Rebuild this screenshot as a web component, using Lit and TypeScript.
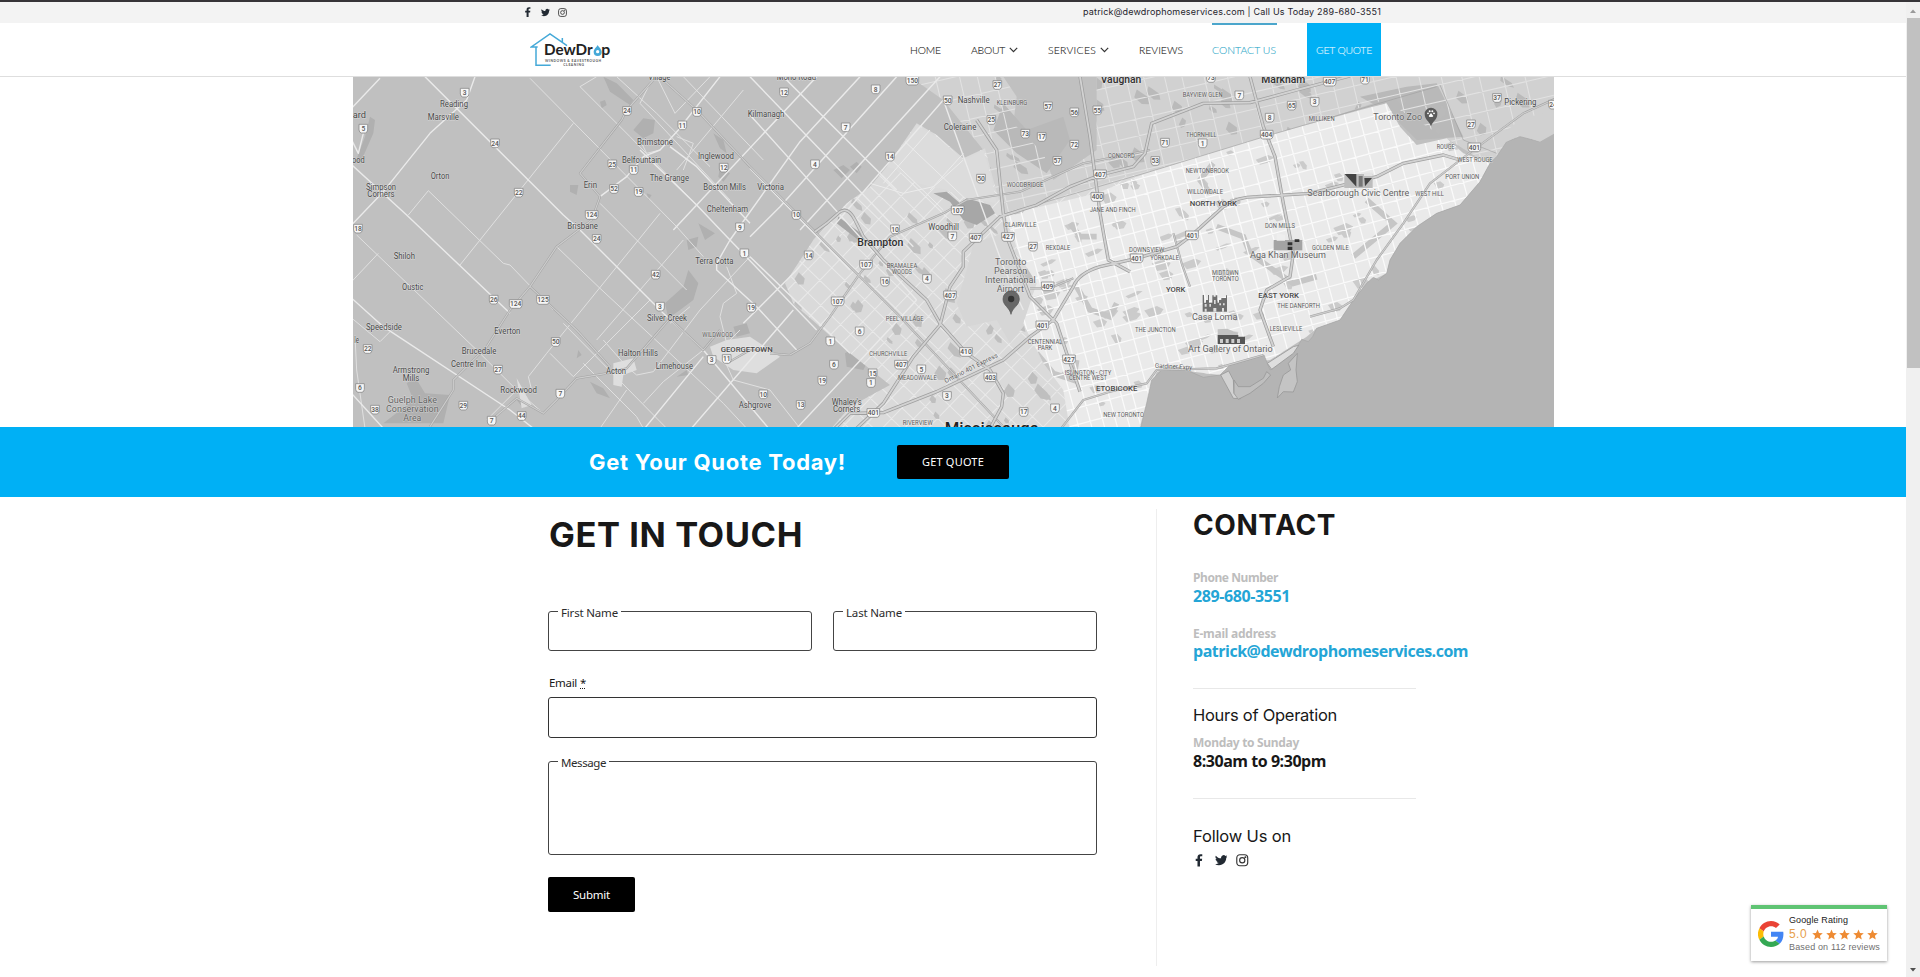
import { LitElement, html, svg, css } from "lit";
import { customElement, property } from "lit/decorators.js";

/** A line of text whose tracking is derived from the width it should take. */
@customElement("tracked-text")
class TrackedText extends LitElement {
  @property({ type: Number }) width = 0;
  @property() text = "";
  static styles = css`
    :host { display: inline-block; white-space: pre; line-height: 1; }
  `;
  render() {
    return html`<span>${this.text}</span>`;
  }
  updated() {
    const span = this.renderRoot.querySelector("span") as HTMLElement;
    span.style.letterSpacing = "0px";
    const natural = span.getBoundingClientRect().width;
    const step = (this.width - natural) / this.text.length;
    span.style.letterSpacing = step.toFixed(3) + "px";
  }
}

const t = (text: string, width: number) =>
  html`<tracked-text .text=${text} .width=${width}></tracked-text>`;

type Label = [number, number, string, number, string];
type Shield = [number, number, string];

// x centre, y centre, text, width, style
const westLabels: Label[] = [
  [928, 20, "Village", 66, "town"], [312, 102, "Reading", 84, "town"], [280, 141, "Marsville", 94, "town"],
  [28, 135, "ard", 40, "town"], [25, 271, "ood", 38, "town"], [270, 319, "Orton", 56, "town"],
  [93, 350, "Simpson", 90, "town"], [93, 373, "Corners", 82, "town"], [163, 559, "Shiloh", 64, "town"],
  [188, 650, "Oustic", 64, "town"], [102, 771, "Speedside", 108, "town"], [20, 809, "le", 14, "town"],
  [387, 844, "Brucedale", 104, "town"], [356, 883, "Centre Inn", 106, "town"], [183, 901, "Armstrong", 110, "town"],
  [183, 924, "Mills", 50, "town"], [472, 783, "Everton", 78, "town"], [506, 961, "Rockwood", 110, "town"],
  [698, 467, "Brisbane", 92, "town"], [721, 345, "Erin", 40, "town"], [915, 215, "Brimstone", 108, "town"],
  [875, 271, "Belfountain", 118, "town"], [958, 324, "The Grange", 118, "town"], [1098, 257, "Inglewood", 108, "town"],
  [1124, 352, "Boston Mills", 128, "town"], [1132, 418, "Cheltenham", 124, "town"], [1093, 573, "Terra Cotta", 114, "town"],
  [951, 744, "Silver Creek", 120, "town"], [864, 850, "Halton Hills", 120, "town"], [798, 902, "Acton", 60, "town"],
  [973, 889, "Limehouse", 112, "town"], [1103, 793, "WILDWOOD", 92, "area"], [1190, 838, "GEORGETOWN", 156, "city"],
  [187, 990, "Guelph Lake", 148, "poi"], [187, 1017, "Conservation", 158, "poi"], [187, 1044, "Area", 54, "poi"],
  [1215, 1004, "Ashgrove", 98, "town"],
];
const midLabels: Label[] = [
  [139, 20, "Mono Road", 118, "town"], [48, 131, "Kilmanagh", 110, "town"], [62, 352, "Victoria", 80, "town"],
  [391, 518, "Brampton", 138, "metro"], [581, 471, "Woodhill", 92, "town"], [671, 89, "Nashville", 96, "town"],
  [786, 98, "KLEINBURG", 92, "area"], [630, 172, "Coleraine", 98, "town"], [1113, 27, "Vaughan", 122, "metro"],
  [1114, 257, "CONCORD", 80, "area"], [825, 345, "WOODBRIDGE", 110, "area"], [1088, 419, "JANE AND FINCH", 138, "area"],
  [811, 464, "CLAIRVILLE", 96, "area"], [924, 532, "REXDALE", 74, "area"], [1190, 538, "DOWNSVIEW", 106, "area"],
  [782, 576, "Toronto", 94, "poi"], [782, 604, "Pearson", 100, "poi"], [781, 631, "International", 152, "poi"],
  [781, 657, "Airport", 82, "poi"], [456, 587, "BRAMALEA", 92, "area"], [456, 604, "WOODS", 60, "area"],
  [464, 745, "PEEL VILLAGE", 114, "area"], [415, 852, "CHURCHVILLE", 114, "area"], [502, 924, "MEADOWVALE", 116, "area"],
  [885, 816, "CENTENNIAL", 104, "area"], [885, 832, "PARK", 44, "area"], [1014, 907, "ISLINGTON - CITY", 140, "area"],
  [1014, 924, "CENTRE WEST", 114, "area"], [1100, 955, "ETOBICOKE", 124, "city"], [1121, 1034, "NEW TORONTO", 122, "area"],
  [290, 995, "Whaley's", 90, "town"], [290, 1018, "Corners", 82, "town"], [503, 1057, "RIVERVIEW", 90, "area"],
  [725, 1074, "Mississauga", 282, "giant"], [1216, 780, "THE JUNCTION", 122, "area"],
];
const eastLabels: Label[] = [
  [400, 27, "Markham", 132, "metro"], [158, 73, "BAYVIEW GLEN", 120, "area"], [515, 147, "MILLIKEN", 78, "area"],
  [154, 194, "THORNHILL", 92, "area"], [172, 301, "NEWTONBROOK", 130, "area"], [165, 364, "WILLOWDALE", 108, "area"],
  [190, 401, "NORTH YORK", 142, "city"], [390, 467, "DON MILLS", 90, "area"], [541, 533, "GOLDEN MILE", 110, "area"],
  [414, 556, "Aga Khan Museum", 228, "poi"], [44, 563, "YORKDALE", 86, "area"], [226, 608, "MIDTOWN", 80, "area"],
  [226, 625, "TORONTO", 80, "area"], [77, 658, "YORK", 58, "city"], [386, 676, "EAST YORK", 122, "city"],
  [446, 708, "THE DANFORTH", 128, "area"], [194, 741, "Casa Loma", 136, "poi"], [408, 776, "LESLIEVILLE", 98, "area"],
  [241, 837, "Art Gallery of Ontario", 254, "poi"], [625, 369, "Scarborough Civic Centre", 306, "poi"],
  [839, 371, "WEST HILL", 86, "area"], [937, 321, "PORT UNION", 102, "area"], [975, 270, "WEST ROUGE", 106, "area"],
  [887, 231, "ROUGE", 54, "area"], [743, 140, "Toronto Zoo", 146, "poi"], [1111, 97, "Pickering", 96, "town"],
];
const westShields: Shield[] = [
  [344, 68, "3"], [40, 176, "5"], [435, 220, "24"], [506, 368, "22"], [24, 476, "18"], [831, 123, "24"], [1041, 126, "10"],
  [997, 166, "11"], [787, 283, "25"], [851, 300, "11"], [792, 357, "52"], [866, 366, "19"], [1121, 293, "12"], [725, 435, "124"],
  [740, 507, "24"], [1170, 472, "9"], [1183, 550, "1"], [917, 614, "42"], [930, 710, "3"], [431, 689, "26"], [497, 702, "124"],
  [579, 690, "125"], [617, 816, "50"], [53, 837, "22"], [444, 899, "27"], [30, 954, "6"], [75, 1019, "38"], [340, 1007, "29"],
  [425, 1052, "7"], [515, 1038, "44"], [631, 971, "7"], [1085, 870, "3"], [1130, 867, "11"], [1204, 713, "19"],
];
const midShields: Shield[] = [
  [102, 67, "12"], [377, 58, "8"], [487, 32, "150"], [287, 172, "7"], [195, 283, "4"], [420, 260, "14"], [593, 91, "50"],
  [742, 45, "27"], [894, 109, "57"], [973, 127, "56"], [1042, 121, "55"], [724, 150, "25"], [826, 191, "73"], [875, 201, "17"],
  [973, 224, "72"], [922, 273, "57"], [693, 326, "50"], [1050, 313, "407"], [1042, 381, "400"], [623, 421, "107"], [139, 435, "10"],
  [435, 478, "10"], [607, 499, "7"], [677, 504, "407"], [774, 501, "427"], [849, 530, "27"], [176, 556, "14"], [348, 584, "107"],
  [405, 635, "16"], [531, 627, "4"], [893, 649, "409"], [1160, 565, "401"], [600, 676, "407"], [263, 694, "107"],
  [329, 784, "6"], [241, 814, "1"], [877, 766, "401"], [648, 846, "410"], [252, 884, "6"], [453, 884, "407"], [514, 898, "5"],
  [957, 868, "427"], [368, 910, "15"], [363, 939, "1"], [721, 922, "403"], [217, 932, "19"], [40, 973, "10"], [152, 1005, "13"],
  [591, 978, "3"], [370, 1029, "401"], [821, 1026, "17"], [915, 1015, "4"],
];
const eastShields: Shield[] = [
  [183, 24, "73"], [539, 35, "407"], [645, 29, "71"], [268, 76, "7"], [425, 107, "65"], [494, 96, "3"], [359, 143, "8"],
  [350, 194, "404"], [45, 218, "71"], [158, 220, "1"], [16, 273, "53"], [1041, 84, "37"], [1209, 104, "24"], [963, 163, "27"],
  [973, 232, "401"], [126, 496, "401"],
];

const heights: Record<string, number> = { town: 25, area: 19, city: 24, poi: 27, metro: 31, giant: 50 };
const label = ([x, y, s, w, k]: Label) => svg`<text class=${"lb " + k} x=${x} y=${y + heights[k] * 0.35}
  textLength=${w} lengthAdjust="spacingAndGlyphs">${s}</text>`;
const shield = ([x, y, s]: Shield) => {
  const w = s.length === 3 ? 38 : 26;
  return svg`<path class="sh" d="M${x - w / 2} ${y - 13}H${x + w / 2}V${y + 4}Q${x + w / 2 - 1} ${y + 12} ${x + w / 2 - 7} ${y + 13}H${x - w / 2 + 7}Q${x - w / 2 + 1} ${y + 12} ${x - w / 2} ${y + 4}Z"/>
  <text class="shn" x=${x} y=${y + 7}>${s}</text>`;
};

/** Repeatable pseudo random numbers, used for parks and grid spacing. */
const rng = (seed: number) => () => {
  seed = (seed * 1664525 + 1013904223) % 4294967296;
  return seed / 4294967296;
};
const grid = (cx: number, cy: number, angle: number, reach: number, gap: number, gapY: number, seed: number) => {
  const r = rng(seed);
  let d = "";
  for (let p = -reach; p < reach; p += gap * (0.8 + r() * 0.4)) d += `M${p.toFixed(0)} ${-reach}V${reach}`;
  for (let p = -reach; p < reach; p += gapY * (0.8 + r() * 0.4)) d += `M${-reach} ${p.toFixed(0)}H${reach}`;
  return svg`<path transform=${`translate(${cx} ${cy}) rotate(${angle})`} d=${d}/>`;
};
const parks = (x0: number, y0: number, w: number, h: number, n: number, seed: number, angle: number) => {
  const r = rng(seed);
  return Array.from({ length: n }, () => {
    const x = x0 + r() * w, y = y0 + r() * h, a = 8 + r() * 20, b = 5 + r() * 13;
    return svg`<path transform=${`translate(${x.toFixed(0)} ${y.toFixed(0)}) rotate(${angle})`}
      d=${`M${-a} ${-b}L${a * 0.5} ${-b * 0.8}L${a} ${b * 0.3}L${a * 0.3} ${b}L${-a * 0.8} ${b * 0.6}Z`}/>`;
  });
};

@customElement("area-map")
class AreaMap extends LitElement {
  static styles = css`
    :host { display: block; width: 1201px; height: 350px; }
    svg { display: block; width: 100%; height: 100%; }
    text { font-family: Roboto, sans-serif; text-anchor: middle; }
    .lb { paint-order: stroke; stroke: #fff; stroke-opacity: .4; stroke-width: 3px; fill: #484848; }
    .town { font-size: 25px; }
    .area { font-size: 19.500px; fill: #5c5c5c; }
    .city { font-size: 24px; font-weight: 500; }
    .poi { font-size: 27px; fill: #636363; }
    .metro { font-size: 31px; font-weight: 500; fill: #303030; }
    .giant { font-size: 50px; font-weight: 500; fill: #222; }
    .sh { fill: #f6f6f6; stroke: #8b8b8b; stroke-width: 2.5px; }
    .shn { font-size: 20px; font-weight: 500; fill: #555; }
    .road { fill: none; stroke: #eaeaea; stroke-width: 4.2px; stroke-linejoin: round; }
    .lane { fill: none; stroke: #e0e0e0; stroke-width: 3px; stroke-linejoin: round; }
    .case { fill: none; stroke: #9f9f9f; stroke-width: 10px; stroke-linejoin: round; }
    .core { fill: none; stroke: #d2d2d2; stroke-width: 5.5px; stroke-linejoin: round; }
    .case2 { fill: none; stroke: #a2a2a2; stroke-width: 6.5px; stroke-linejoin: round; }
    .core2 { fill: none; stroke: #cdcdcd; stroke-width: 3.5px; stroke-linejoin: round; }
  `;
  render() {
    const urban = "M1700 160L1760 195L1840 265L1905 235L1930 330L1960 430L2400 300V1080H1440L1500 1010L1620 945L1500 850L1330 700L1305 640L1390 510L1490 400L1560 350L1610 290Z";
    const toronto = "M1965 435L2240 370L2400 305L2750 198L3040 118L3110 100L3150 170L3200 225L3290 205L3340 250L3420 280L3390 335L3330 405L3260 430L3200 470L3150 520L3120 570L3110 610L3050 640L3010 690L2970 750L2900 775L2870 800L2760 870L2650 885L2610 915L2530 905L2480 893L2420 905L2390 1000L2365 1080H2160L2140 960L2080 880L2020 760L2060 640L2010 560Z";
    const vaughan = "M1680 20H1960L2000 80L1990 160L2080 250L2110 330L2240 240V20H3640V250L3420 285L3100 90L2400 320L1960 435L1900 240L1780 90Z";
    const lake = "M3640 165L3600 195L3570 215L3510 200L3470 215L3440 260L3420 280L3390 335L3330 405L3260 430L3200 470L3150 520L3120 570L3110 610L3085 630L3070 622L3050 640L3010 690L2970 750L2900 775L2888 800L2875 815L2855 808L2840 835L2760 900L2742 855L2700 868L2640 885L2610 915L2560 922L2490 892L2440 895L2405 930L2390 1000L2370 1080H3640Z";
    const highways = [
      "M1395 485L1430 460L1470 425Q1495 410 1515 450L1540 500L1600 570L1730 690L1770 760L1850 850L1920 900L1960 970L1955 1010L1920 1075",
      "M1450 1080L1500 1030L1600 1028L1760 965L1960 870L2040 800L2110 750L2170 650Q2185 610 2250 590L2360 565L2480 530L2520 500L2620 410Q2660 380 2720 380L2880 370L3080 320L3160 280L3280 255L3330 270",
      "M1520 1075L1600 1000L1690 860L1770 765L1800 650L1840 590V545L1950 440L2060 405L2160 350L2250 315L2350 290L2385 250L2405 160L2560 100L2700 98L2840 60L3000 18",
      "M1880 150L1940 240L1960 430L1970 500L2040 680L2120 760L2150 850L2190 965",
      "M2190 20L2220 200L2250 430L2275 570L2340 605",
      "M2700 20L2740 170L2775 260L2800 400L2830 550L2820 620L2750 660L2730 720L2770 830",
    ].join("");
    const thinHighways = [
      "M2880 740L2970 715L3010 690L3080 570L3160 460L3240 340L3370 240L3520 130L3640 75",
      "M2040 655H2100L2170 625", "M2470 490L2495 580L2520 650",
      "M2130 1080L2200 990L2280 965L2390 940L2420 900L2600 895L2740 855",
    ].join("");
    const rural = [
      "M225 20L640 435L690 480L940 730L1060 840L1260 1080", "M0 280L170 435L480 730", "M0 680L100 770L480 1020L550 1075",
      "M90 25L0 120", "M375 20L350 90L240 190L100 365L0 470", "M960 230L1040 290L1200 460",
      "M870 240L1040 405L1140 510L1400 780", "M750 380L790 350L830 320L880 260L930 240L985 180L1110 20",
      "M1400 20L1040 405L970 480", "M1530 20L1350 215L1140 510L1100 580V600L1220 710L1340 840",
      "M0 200L25 250L40 190", "M100 1075L0 965",
      "M1200 20L1690 530", "M1300 20L1640 360", "M1200 135L1700 690", "M1200 295L1500 600", "M1780 90L1440 480L1340 600L1180 760",
      "M1770 20L1350 480", "M1640 20L1290 410L1200 500", "M1020 1080L1330 720", "M1200 560L1500 850",
      "M880 1080L1060 860", "M1340 1075L1700 690", "M1780 90L1830 230L1960 590L2020 720",
    ].join("");
    const lanes = [
      "M540 25L980 470L1060 560", "M670 160L330 585", "M235 362L175 435M235 362L460 580L480 585L610 720", "M20 495L380 840L500 960",
      "M85 550L0 640", "M0 740L90 815L120 785", "M15 800L20 900L45 1075", "M620 530L750 655L960 850L1120 1000L1190 1075",
      "M1000 510L740 810", "M930 430L590 850L535 920L545 960", "M690 50L840 200L1040 405", "M740 20L690 50",
      "M800 20L920 130L1080 290", "M870 100L910 20M870 100L1140 390", "M920 20L975 130L1080 20", "M1180 60L980 300",
      "M1000 20L1240 270", "M750 400L1010 660", "M640 760L950 1075", "M760 810L830 890L860 915L910 905L1050 720L1200 560",
      "M700 880L780 960L860 1040L880 1075", "M600 850L670 920L900 690", "M830 960L750 1075", "M940 935L880 1000M1060 840L940 935",
      "M1110 840L1150 930L1260 960L1350 1075", "M870 210L890 250L930 240", "M980 200L1030 220L1000 300",
      "M1120 700L1110 740L1130 820L1170 780", "M960 760L1020 710M1130 590L1160 670L1120 700", "M410 1050L500 960L580 1030",
    ].join("");
    const regional = [
      "M910 30L830 120L815 150L690 310L750 380L725 450L620 530L540 650L480 720L410 830L310 930V960L240 1070",
      "M940 30L1040 120L1200 290L1340 430L1400 490L1640 730L1960 1070", "M540 650L680 780L780 890", "M425 1050L500 985L580 1030L620 990L680 925L770 910L830 895L960 745L1060 840L1110 780",
      "M1260 850L1320 855L1380 820L1440 740L1530 610L1620 500L1780 430L1850 390L2010 365L2200 280L2400 240", "M1250 840L1200 840L1130 880",
    ].join("");
    return html`<svg viewBox="9 21 3603 1050" preserveAspectRatio="none">
      <defs>
        <clipPath id="urban"><path d=${urban}/></clipPath>
        <clipPath id="toronto"><path d=${toronto}/></clipPath>
        <clipPath id="vaughan"><path d=${vaughan}/></clipPath>
      </defs>
      <rect x="0" y="0" width="3640" height="1090" fill="#c0c0c0"/>
      <g fill="#b0b0b0">
        <path d="M60 140L75 150L70 190L35 270L15 280L45 200Z"/>
        <path d="M760 20L800 40L850 90L840 105L780 65ZM880 145L915 150L910 190L880 205L850 180ZM750 95L765 90L770 105L755 115Z"/>
        <path d="M1090 190L1120 210L1130 250L1110 235ZM1110 290L1140 310L1120 335L1105 320ZM660 345L685 345L680 375L660 365ZM890 370L905 375L895 390Z"/>
        <path d="M1045 460L1095 490L1065 510ZM1010 510L1045 500L1040 530L1015 540ZM1015 600L1045 640L1030 690L990 720L955 745L945 700L1000 650Z"/>
        <path d="M170 940L195 920L225 970L300 975L280 1060H100L190 990ZM720 935L760 955L780 985L740 970ZM980 920L1010 900L1015 915ZM685 840L695 855L680 865ZM500 990L530 975L520 1015ZM1150 770L1190 760L1200 790L1160 800Z"/>
        <path d="M1450 300L1480 285L1500 300L1475 325ZM1500 290L1520 275L1535 290L1520 310ZM1485 850L1520 830L1560 860L1540 900L1490 890Z"/>
      </g>
      <path fill="#d1d1d1" d=${vaughan}/>
      <path fill="#b9b9b9" d="M1960 100L2030 180L2140 140L2160 210L2090 310L2000 250L1930 180ZM3030 80L3170 50L3260 40L3340 200L3200 210L3120 130Z"/>
      <g fill="#bababa" clip-path="url(#vaughan)">${parks(1900, 30, 1650, 270, 60, 7, 30)}</g>
      <g clip-path="url(#vaughan)" fill="none" stroke="#e2e2e2" stroke-width="3.2">${grid(2500, 150, -13, 1100, 62, 58, 9)}</g>
      <path fill="#dadada" d=${urban}/>
      <path fill="#dedede" d="M790 880L850 865L860 900L820 915L815 950L790 945ZM500 925L545 1005L515 1015ZM1080 830L1130 810L1200 800L1290 860L1220 910L1150 900L1090 860Z"/>
      <g clip-path="url(#urban)">
        <g fill="none" stroke="#e9e9e9" stroke-width="3">${grid(1750, 700, 44, 1000, 46, 52, 3)}</g>
        <g fill="#bfbfbf">${parks(1320, 380, 800, 690, 62, 21, 40)}</g>
        <path fill="#d6d6d6" d="M1870 520L1960 490L2010 580L2060 720L1980 820L1940 750L1850 770L1820 700L1850 600Z"/>
      </g>
      <path fill="#dcdcdc" d="M1700 165L1760 200L1840 270L1900 240L1925 330L1940 400L1850 385L1790 360L1700 340L1640 300L1610 290Z"/>
      <path fill="none" stroke="#ececec" stroke-width="3" d="M1625 270L1780 420M1665 215L1850 390M1740 180L1600 340M1840 270L1740 360M1560 340L1660 370L1750 350L1840 250"/>
      <path fill="#a7a7a7" d="M1750 370L1790 365L1830 400L1850 385L1920 405L1935 430L1880 465L1840 450L1800 395ZM1465 440L1540 495L1525 510L1460 460Z"/>
      <path fill="#eaeaea" d=${toronto}/>
      <g clip-path="url(#toronto)">
        <g fill="#cbcbcb">${parks(1980, 220, 1350, 800, 120, 5, -25)}</g>
        <path fill="none" stroke="#c6c6c6" stroke-width="17" d="M2160 460L2190 500L2240 500M2600 470L2680 500L2700 550L2770 600L2830 640L2900 620M2590 280L2550 330L2580 370M3050 390L3130 460L3010 560M2180 650L2220 720L2280 740L2300 700M2060 850L2110 910L2170 930L2180 870"/>
        <g fill="none" stroke="#fafafa" stroke-width="3.800">${grid(2650, 600, -15, 1000, 41, 56, 14)}</g>
      </g>
      <path fill="#b4b4b4" stroke="#a4a4a4" stroke-width="2" d=${lake}/>
      <path fill="#d1d1d1" d="M3470 215L3510 195L3570 215L3640 175V110L3510 150L3440 205Z"/>
      <g fill="#d2d2d2" stroke="#999" stroke-width="2.500">
        <path d="M2612 915L2636 903L2650 930L2652 970L2672 986L2650 985Z"/>
        <path fill="#bfbfbf" d="M2652 930L2665 950L2700 950L2740 925L2750 905L2762 915L2740 940L2700 970L2665 988L2652 970Z"/>
        <path fill="#c4c4c4" d="M2842 850L2838 900L2842 935L2830 966L2800 965L2782 984L2788 950L2800 915L2822 900L2815 880Z"/>
        <path fill="#dedede" d="M2752 880L2830 830L2846 826L2830 850L2765 898Z"/>
      </g>
      <path fill="none" stroke="#a2a2a2" stroke-width="2" d="M1970 430L2400 305L2750 198L3260 50M3270 45L3340 210L3440 250"/>
      <path class="lane" d=${lanes}/><path class="road" d=${rural}/>
      <path class="case2" d=${regional}/><path class="core2" d=${regional}/>
      <path class="case2" d=${thinHighways}/><path class="core2" d=${thinHighways}/>
      <path class="case" d=${highways}/><path class="core" d=${highways}/>
      <text class="area lb" transform="translate(1866 900) rotate(-27)" textLength="176">Ontario 401 Express</text>
      <text class="area lb" transform="translate(2470 896) rotate(3)" textLength="112">Gardiner Expy</text>
      ${westShields.map(shield)}${westLabels.map(label)}
      <g transform="translate(1200 0)">${midShields.map(shield)}${midLabels.map(label)}</g>
      <g transform="translate(2400 0)">
        ${eastShields.map(shield)}${eastLabels.map(label)}
        <path fill="#bdbdbd" d="M583 312H668V354H583Z"/><path fill="#e4e4e4" d="M622 310H642V318H668V308H622Z"/><path fill="#444" d="M584 312H619V350ZM643 324H666L645 349Z"/><path fill="#777" d="M626 318H638V350H626Z"/>
        <path fill="#a4a4a4" d="M371 510H457V541H371Z"/><path fill="#eee" d="M380 490L405 495V512H380Z"/><path fill="#333" d="M413 517H427V526H413ZM413 530H427V540H413ZM434 508H448V516H434Z"/>
        <path fill="#6e6e6e" d="M158 675H162V698H168V690H174V675H177V698H187V676H191V680H197V676H202V698H207V690H214V684H228V676H231V725H158Z"/><path fill="#ddd" d="M164 702H170V710H164ZM178 702H183V710H178ZM192 690H197V702H192ZM208 700H213V706H208ZM219 700H224V706H219ZM164 716H170V725H164ZM190 714H199V725H190ZM216 714H222V725H216Z"/>
        <path fill="#c2c2c2" d="M203 778L232 776L264 790V796H203Z"/><path fill="#555" d="M203 795H265V800H285V822H203Z"/><path fill="#ccc" d="M210 807H219V819H210ZM227 807H236V819H227ZM244 807H253V819H244ZM261 807H270V819H261Z"/>
        <path fill="#5b5b5b" d="M843 169C839 155 824 149 824 132A19 19 0 0 1 862 132C862 149 847 155 843 169Z"/>
        <g fill="#fff"><circle cx="834" cy="130" r="2.800"/><circle cx="839" cy="124" r="3"/><circle cx="847" cy="124" r="3"/><circle cx="852" cy="130" r="2.800"/><path d="M843 129L850 138Q848 142 843 140Q838 142 836 138Z"/></g>
      </g>
      <path fill="#686868" stroke="#555" stroke-width="2" d="M1983 733C1979 712 1959 707 1959 687A24.500 24.500 0 0 1 2008 687C2008 707 1987 712 1983 733Z"/>
      <circle cx="1983.500" cy="687" r="9.500" fill="#333"/>
    </svg>`;
  }
}

const facebook = html`<svg viewBox="0 0 12 12"><path d="M4.300 12V6.700H2.600V4.600H4.300V3.100C4.300 1.100 5.400.2 7.200.2C8 .2 8.700.3 8.900.3V2.200H7.800C6.900 2.200 6.700 2.700 6.700 3.300V4.600H8.800L8.500 6.700H6.700V12Z"/></svg>`;
const twitter = html`<svg viewBox="0 0 24 24"><path d="M23.950 4.570a10 10 0 0 1-2.820.77 4.960 4.960 0 0 0 2.160-2.720c-.95.55-2 .95-3.130 1.180a4.920 4.920 0 0 0-8.380 4.480C7.690 8.090 4.070 6.130 1.640 3.160a4.920 4.920 0 0 0 1.520 6.570 4.900 4.900 0 0 1-2.230-.61v.06a4.920 4.920 0 0 0 3.950 4.830 5 5 0 0 1-2.210.08 4.940 4.940 0 0 0 4.600 3.420A9.870 9.870 0 0 1 0 19.540a13.990 13.990 0 0 0 7.550 2.210c9.050 0 14-7.500 14-13.980l-.02-.64a9.940 9.940 0 0 0 2.420-2.560z"/></svg>`;
const instagram = html`<svg viewBox="0 0 24 24" class="line"><rect x="1.500" y="1.500" width="21" height="21" rx="6"/><circle cx="12" cy="12" r="5"/><circle cx="18" cy="6" r=".8"/></svg>`;
const chevron = html`<svg class="chev" viewBox="0 0 9 6"><path d="M.8.900L4.500 4.700L8.200.900"/></svg>`;
const star = html`<svg viewBox="0 0 24 24"><path d="M12 1l3.300 7.500 8.200.8-6.200 5.400 1.800 8L12 18.500 4.900 22.700l1.800-8L.5 9.300l8.200-.8z"/></svg>`;

@customElement("app-root")
class AppRoot extends LitElement {
  static styles = css`
    :host { display: flex; height: 977px; overflow: hidden; background: #fff; color: #181818; font-family: "Open Sans", sans-serif; }
    * { box-sizing: border-box; }
    .page { flex: 1; min-width: 0; display: flex; flex-direction: column; }
    .topbar { height: 23px; border-top: 2px solid #363438; background: #f3f3f3; display: flex; align-items: center; justify-content: space-between; padding: 0 525px 1px 523px; }
    .topbar .say { font: 400 9px Inter, sans-serif; color: #1f242c; height: 11px; display: flex; }
    .social { display: flex; align-items: center; fill: #222a33; }
    .social svg { display: block; }
    .line { fill: none; stroke: #333; stroke-width: 2.2; }
    .small svg { width: 9px; height: 9px; }
    .small { gap: 8px; } .small svg:first-child { width: 10px; height: 10px; }
    header { height: 54px; display: flex; padding: 0 525px 0 530px; border-bottom: 1px solid #dedede; justify-content: space-between; }
    .logo { width: 81px; height: 36px; margin-top: 9px; }
    .logo text { font-family: Lato, sans-serif; }
    nav { display: flex; font: 300 10.400px/1 Lato, sans-serif; color: #222; -webkit-text-stroke: .1px; }
    nav a { display: flex; align-items: center; height: 53px; padding-top: 1px; }
    .chev { width: 9px; height: 6px; margin-left: 4px; margin-right: 1px; fill: none; stroke: #333; stroke-width: 1.200; }
    .home { margin-right: 30px; } .about { margin-right: 29px; } .services { margin-right: 29px; } .reviews { margin-right: 29px; }
    nav .current { color: #2fa9c9; border-top: 2px solid #4ba6cc; padding: 0 0 1px; margin-right: 30px; width: 65px; }
    .cta { background: #00b0f5; color: #e6f8ff; width: 74px; justify-content: center; }
    area-map { margin-left: 353px; flex: none; }
    .banner { height: 70px; flex: none; background: #00b0f5; display: flex; align-items: center; padding-left: 589px; color: #fff; font: 700 22px Inter, sans-serif; }
    .banner button { margin-left: 51px; width: 112px; height: 34px; font-size: 11px; padding-bottom: 1px; }
    button { display: flex; align-items: center; justify-content: center; border: 0; border-radius: 2px; background: #000; color: #fff; font: 400 11.500px "Noto Sans", sans-serif; padding: 0; }
    .content { flex: 1; display: flex; }
    .form { width: 608px; margin-left: 548px; padding: 21px 59px 0 0; }
    h1, h2, h3, p { margin: 0; font-family: Inter, sans-serif; line-height: 1; display: flex; }
    h1 { font-size: 34.500px; font-weight: 700; height: 35px; align-items: center; padding-left: 1px; }
    .names { display: flex; gap: 21px; margin-top: 51px; }
    fieldset { border: 1px solid #444; border-radius: 3px; margin: 0; padding: 0 0 0 9px; min-width: 0; }
    legend { padding: 3px 3px 0; font: 400 11.500px/11px "Noto Sans", sans-serif; color: #2b2b2b; display: flex; height: 14px; }
    .names fieldset { flex: 1; height: 47px; }
    .mail { margin-top: 25px; font: 400 11.500px/14px "Noto Sans", sans-serif; display: flex; gap: 3px; height: 14px; align-items: center; padding-left: 1px; }
    .mail abbr { text-decoration: underline dotted; line-height: 14px; }
    .box { height: 41px; border: 1px solid #333; border-radius: 3px; margin-top: 7px; }
    .message { height: 101px; margin-top: 16px; }
    .submit { margin-top: 22px; width: 87px; height: 35px; }
    aside { border-left: 1px solid #eee; margin-top: 12px; height: 457px; padding: 4px 0 0 36px; display: flex; flex-direction: column; }
    h2 { font-size: 28px; height: 24px; align-items: center; margin-bottom: 34px; }
    .key { font: 700 12px/1 "Noto Sans", sans-serif; color: #bdbdbd; height: 14px; align-items: center; }
    .val { font: 700 16px/1 "Open Sans", sans-serif; height: 18px; align-items: center; margin-top: 2px; }
    .val + .key { margin-top: 22px; }
    .val + .key + .val { margin-top: 1px; }
    .blue { color: #24a5d6; }
    hr { border: 0; height: 1px; background: #e8e8e8; width: 223px; margin: 28px 0 0; }
    h3 { font-size: 16.500px; font-weight: 400; height: 20px; align-items: center; }
    .hours { margin: 16px 0 11px; } .follow { margin: 27px 0 8px; }
    .big { gap: 9px; } .big svg { width: 12.500px; height: 12.500px; }
    .rail { width: 14px; background: #f0f0f0; display: flex; flex-direction: column; align-items: flex-end; padding-top: 2px; border-top: 2px solid #363438; }
    .rail svg { width: 14px; height: 14px; fill: #505050; flex: none; }
    .rail svg:first-child { fill: #9a9a9a; }
    .thumb { width: 13px; height: 350px; background: #c1c1c1; margin-bottom: auto; }
    .badge { position: absolute; left: 1751px; top: 905px; width: 136px; height: 56px; border-top: 4px solid #5fc473; background: #fff; box-shadow: 0 1px 3px rgba(0,0,0,.4); display: flex; padding: 7px 0 0 7px; gap: 5px; font: 400 9px/1 "Liberation Sans", sans-serif; color: #222; }
    .glogo { width: 26px; height: 26px; margin-top: 5px; flex: none; }
    .rows { display: flex; flex-direction: column; }
    .rows > * { height: 9px; }
    .rows .score { display: flex; align-items: center; height: 18px; font-size: 12px; color: #e7a04c; gap: 5px; }
    .score svg { width: 11px; height: 11px; fill: #ee8b33; display: block; }
    .stars { display: flex; gap: 2.700px; }
    .based { color: #707070; }
  `;
  render() {
    return html`<div class="page">
      <div class="topbar"><div class="social small">${facebook}${twitter}${instagram}</div>
        <div class="say">${t("patrick@dewdrophomeservices.com | Call Us Today 289-680-3551", 298)}</div></div>
      <header>
        <svg class="logo" viewBox="90 96 243 108">
          <path fill="none" stroke="#45a9d8" stroke-width="4.500" d="M113 141H94L150 102L201 137M187 129V114M108 141V196H152"/>
          <text x="132" y="165" font-size="45" font-weight="700" fill="#222" textLength="146" lengthAdjust="spacingAndGlyphs">DewDr</text>
          <path fill="#45a9d8" fill-rule="evenodd" d="M293 135C297 143 305 147 305 156A12 12 0 0 1 281 156C281 147 289 143 293 135ZM293 150A5 5 0 1 0 293 160A5 5 0 1 0 293 150Z"/>
          <text x="304" y="165" font-size="45" font-weight="700" fill="#222" textLength="27" lengthAdjust="spacingAndGlyphs">p</text>
          <text x="135" y="185" font-size="10" font-weight="700" fill="#555" textLength="168">WINDOWS &amp; EAVESTROUGH</text>
          <text x="190" y="198" font-size="10" font-weight="700" fill="#555" textLength="62">CLEANING</text>
        </svg>
        <nav>
          <a class="home">${t("HOME", 31)}</a><a class="about">${t("ABOUT", 34)}${chevron}</a>
          <a class="services">${t("SERVICES", 48)}${chevron}</a><a class="reviews">${t("REVIEWS", 44)}</a>
          <a class="current">${t("CONTACT US", 64)}</a><a class="cta">${t("GET QUOTE", 56)}</a>
        </nav>
      </header>
      <area-map></area-map>
      <div class="banner">${t("Get Your Quote Today!", 257)}<button>${t("GET QUOTE", 62)}</button></div>
      <div class="content">
        <div class="form">
          <h1>${t("GET IN TOUCH", 254)}</h1>
          <div class="names">
            <fieldset><legend>${t("First Name", 57)}</legend></fieldset>
            <fieldset><legend>${t("Last Name", 56)}</legend></fieldset>
          </div>
          <div class="mail">${t("Email", 28)}<abbr>*</abbr></div>
          <div class="box"></div>
          <fieldset class="message"><legend>${t("Message", 45)}</legend></fieldset>
          <button class="submit">${t("Submit", 37)}</button>
        </div>
        <aside>
          <h2>${t("CONTACT", 143)}</h2>
          <p class="key">${t("Phone Number", 85)}</p>
          <p class="val blue">${t("289-680-3551", 97)}</p>
          <p class="key">${t("E-mail address", 83)}</p>
          <p class="val blue">${t("patrick@dewdrophomeservices.com", 275)}</p>
          <hr>
          <h3 class="hours">${t("Hours of Operation", 144)}</h3>
          <p class="key">${t("Monday to Sunday", 106)}</p>
          <p class="val">${t("8:30am to 9:30pm", 133)}</p>
          <hr>
          <h3 class="follow">${t("Follow Us on", 98)}</h3>
          <div class="social big">${facebook}${twitter}${instagram}</div>
        </aside>
      </div>
    </div>
    <div class="rail"><svg viewBox="0 0 14 14"><path d="M4 9L7 5.500L10 9Z"/></svg><div class="thumb"></div><svg viewBox="0 0 14 14"><path d="M4 5L7 8.500L10 5Z"/></svg></div>
    <div class="badge">
      <svg class="glogo" viewBox="0 0 48 48"><path fill="#ea4335" d="M24 9.500c3.540 0 6.710 1.220 9.210 3.600l6.850-6.850C35.900 2.380 30.470 0 24 0 14.620 0 6.510 5.380 2.560 13.220l7.980 6.190C12.430 13.720 17.740 9.500 24 9.500z"/><path fill="#4285f4" d="M46.980 24.550c0-1.570-.15-3.090-.38-4.550H24v9.020h12.940c-.58 2.960-2.260 5.480-4.780 7.180l7.730 6c4.510-4.180 7.090-10.360 7.090-17.650z"/><path fill="#fbbc05" d="M10.530 28.590a14.500 14.500 0 0 1 0-9.180l-7.980-6.190a24 24 0 0 0 0 21.560z"/><path fill="#34a853" d="M24 48c6.480 0 11.930-2.130 15.890-5.810l-7.730-6c-2.150 1.450-4.920 2.300-8.160 2.300-6.260 0-11.570-4.220-13.470-9.910l-7.980 6.190C6.510 42.620 14.620 48 24 48z"/></svg>
      <div class="rows">${t("Google Rating", 59)}
        <div class="score">${t("5.0", 18)}<div class="stars">${[1, 2, 3, 4, 5].map(() => star)}</div></div>
        <span class="based">${t("Based on 112 reviews", 91)}</span></div>
    </div>`;
  }
}
